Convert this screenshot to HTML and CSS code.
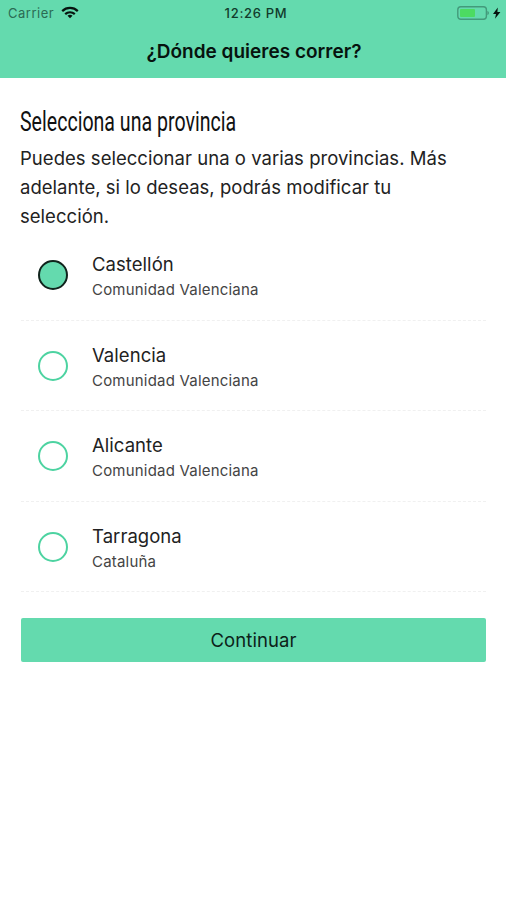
FILE: index.html
```html
<!DOCTYPE html>
<html lang="es">
<head>
    <meta charset="UTF-8">
    <meta name="viewport" content="width=device-width, initial-scale=1.0">
    <title>¿Dónde quieres correr?</title>
    <link rel="stylesheet" href="styles.css">
</head>
<body>
    <header class="header">
        <div class="status-bar">
            <div class="carrier">
                <span>Carrier</span>
                <svg class="wifi" width="18" height="13" viewBox="0 0 18 13" fill="none" stroke="#07130e" stroke-width="2.2">
                    <path d="M1.2 5.1C5.6.9 12.4.9 16.8 5.1"/>
                    <path d="M4.2 8.1C6.9 5.6 11.1 5.6 13.8 8.1"/>
                    <path d="M9 12.3L6.5 9.8C7.9 8.5 10.1 8.5 11.5 9.8Z" fill="#07130e" stroke="none"/>
                </svg>
            </div>
            <span class="time">12:26 PM</span>
            <svg class="battery" width="44" height="16" viewBox="0 0 44 16">
                <rect x=".8" y="1.7" width="28.6" height="12.6" rx="3" fill="none" stroke="#439a7b" stroke-width="1.4"/>
                <rect x="3" y="4" width="15" height="8" rx="1" fill="#4cdb62"/>
                <path d="M30.4 6c2 .6 2 3.4 0 4z" fill="#439a7b"/>
                <path d="M40.8 2.4L36 8.9h3L38 13.8l5.4-6.9h-3z" fill="#07130e"/>
            </svg>
        </div>
        <h1 class="title">¿Dónde quieres correr?</h1>
    </header>

    <main class="content">
        <h2 class="heading">Selecciona una provincia</h2>
        <p class="intro">Puedes seleccionar una o varias provincias. Más adelante, si lo deseas, podrás modificar tu selección.</p>

        <ul class="provinces">
            <li class="province selected">
                <span class="radio"></span>
                <div>
                    <div class="name">Castellón</div>
                    <div class="region">Comunidad Valenciana</div>
                </div>
            </li>
            <li class="province">
                <span class="radio"></span>
                <div>
                    <div class="name">Valencia</div>
                    <div class="region">Comunidad Valenciana</div>
                </div>
            </li>
            <li class="province">
                <span class="radio"></span>
                <div>
                    <div class="name">Alicante</div>
                    <div class="region">Comunidad Valenciana</div>
                </div>
            </li>
            <li class="province">
                <span class="radio"></span>
                <div>
                    <div class="name">Tarragona</div>
                    <div class="region">Cataluña</div>
                </div>
            </li>
        </ul>

        <button class="continue">Continuar</button>
    </main>

    <script>
        document.querySelectorAll('.province').forEach((province) => {
            province.addEventListener('click', () => {
                province.classList.toggle('selected');
            });
        });
    </script>
</body>
</html>
```
FILE: styles.css
```css
* {
    box-sizing: border-box;
}

body {
    margin: 0;
    height: 900px;
    background: #fff;
    color: #222;
    font-family: Inter, 'Liberation Sans', sans-serif;
}

.header {
    height: 78px;
    background: #64daae;
    color: #07130e;
}

.status-bar {
    display: grid;
    grid-template-columns: 1fr auto 1fr;
    align-items: center;
    height: 26px;
    padding: 0 5px 0 8px;
    font-size: 13px;
}

.carrier {
    display: flex;
    align-items: center;
    gap: 7px;
    color: #2b6b54;
    letter-spacing: 0.5px;
}

.time {
    padding-left: 3px;
    font-weight: 500;
    letter-spacing: 0.7px;
    color: #123b2c;
}

.wifi {
    margin-top: -1px;
}

.battery {
    justify-self: end;
}

.title {
    margin: 0;
    padding-left: 2px;
    font-size: 19px;
    font-weight: 600;
    line-height: 52px;
    text-align: center;
}

.content {
    padding: 27px 20px 0 21px;
}

.heading {
    width: max-content;
    margin: 0 0 0 -1px;
    font-family: Roboto, sans-serif;
    font-size: 27px;
    font-weight: 400;
    line-height: 34px;
    color: #111;
    transform: scaleX(0.725);
    transform-origin: left;
}

.intro {
    margin: 5px 0 0 -1px;
    padding-right: 20px;
    font-size: 18.5px;
    line-height: 29px;
    letter-spacing: 0.03px;
}

.provinces {
    margin: -1px 0 0;
    padding: 0;
    list-style: none;
}

.province {
    display: flex;
    align-items: center;
    gap: 24px;
    height: 90.6px;
    padding: 1px 0 0 17px;
    border-bottom: 1px dashed #f0f0f0;
}

.radio {
    width: 30px;
    height: 30px;
    border: 2px solid #4dd3a1;
    border-radius: 50%;
}

.selected .radio {
    background: #64daae;
    border-color: #10231c;
}

.name {
    margin-top: 3px;
    font-size: 18.5px;
    line-height: 26px;
    letter-spacing: 0.05px;
}

.region {
    font-size: 15px;
    line-height: 25px;
    letter-spacing: 0.2px;
    color: #444;
}

.continue {
    display: block;
    width: 100%;
    height: 44px;
    margin-top: 26px;
    padding: 0;
    border: none;
    border-radius: 2px;
    background: #64daae;
    color: #0c2219;
    font-family: inherit;
    font-size: 18.5px;
    letter-spacing: 0.1px;
}
```
